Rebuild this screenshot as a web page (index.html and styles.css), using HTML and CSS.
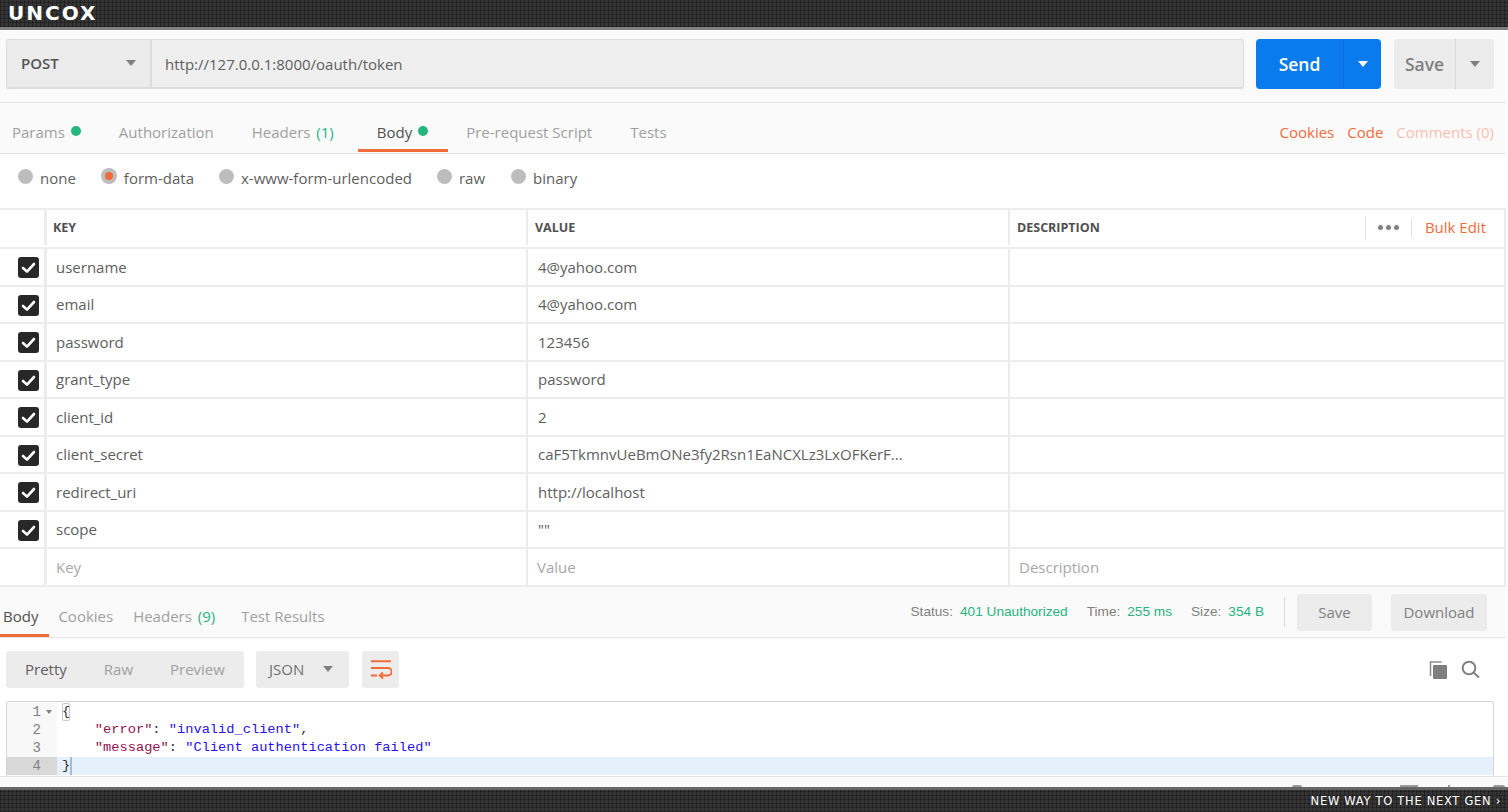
FILE: index.html
```html
<!DOCTYPE html>
<html lang="en">
<head>
<meta charset="utf-8">
<title>Postman</title>
<link rel="stylesheet" href="styles.css">
</head>
<body>
<header class="strip strip-top"><span class="logo">UNCOX</span></header>
<div class="req-bar">
  <div class="url-group">
    <div class="method"><span>POST</span><i class="caret"></i></div>
    <div class="url">http://127.0.0.1:8000/oauth/token</div>
  </div>
  <div class="send"><span class="send-label">Send</span><span class="send-drop"><i class="caret caret-white"></i></span></div>
  <div class="save"><span class="save-label">Save</span><span class="save-drop"><i class="caret"></i></span></div>
</div>
<nav class="tabs">
  <span class="tab t-params">Params<i class="dot"></i></span>
  <span class="tab t-auth">Authorization</span>
  <span class="tab t-head">Headers <b class="count">(1)</b></span>
  <span class="tab t-body active">Body<i class="dot"></i></span>
  <span class="tab t-pre">Pre-request Script</span>
  <span class="tab t-tests">Tests</span>
  <span class="tab-links"><a>Cookies</a><a>Code</a><a class="faded">Comments (0)</a></span>
</nav>
<div class="radios">
  <label class="radio r-none"><i class="rb"></i>none</label>
  <label class="radio r-form"><i class="rb on"></i>form-data</label>
  <label class="radio r-url"><i class="rb"></i>x-www-form-urlencoded</label>
  <label class="radio r-raw"><i class="rb"></i>raw</label>
  <label class="radio r-bin"><i class="rb"></i>binary</label>
</div>
<section class="table">
  <div class="row head">
    <div class="cell check"></div>
    <div class="cell">KEY</div>
    <div class="cell">VALUE</div>
    <div class="cell desc">DESCRIPTION<span class="head-tools"><span class="dots"><i></i><i></i><i></i></span><a>Bulk Edit</a></span></div>
  </div>
  <div class="row"><div class="cell check"><i class="cb"><svg viewBox="0 0 21 21"><path d="M5 11l4 3.6L16 7" /></svg></i></div><div class="cell">username</div><div class="cell">4@yahoo.com</div><div class="cell"></div></div>
  <div class="row"><div class="cell check"><i class="cb"><svg viewBox="0 0 21 21"><path d="M5 11l4 3.6L16 7" /></svg></i></div><div class="cell">email</div><div class="cell">4@yahoo.com</div><div class="cell"></div></div>
  <div class="row"><div class="cell check"><i class="cb"><svg viewBox="0 0 21 21"><path d="M5 11l4 3.6L16 7" /></svg></i></div><div class="cell">password</div><div class="cell">123456</div><div class="cell"></div></div>
  <div class="row"><div class="cell check"><i class="cb"><svg viewBox="0 0 21 21"><path d="M5 11l4 3.6L16 7" /></svg></i></div><div class="cell">grant_type</div><div class="cell">password</div><div class="cell"></div></div>
  <div class="row"><div class="cell check"><i class="cb"><svg viewBox="0 0 21 21"><path d="M5 11l4 3.6L16 7" /></svg></i></div><div class="cell">client_id</div><div class="cell">2</div><div class="cell"></div></div>
  <div class="row"><div class="cell check"><i class="cb"><svg viewBox="0 0 21 21"><path d="M5 11l4 3.6L16 7" /></svg></i></div><div class="cell">client_secret</div><div class="cell">caF5TkmnvUeBmONe3fy2Rsn1EaNCXLz3LxOFKerF...</div><div class="cell"></div></div>
  <div class="row"><div class="cell check"><i class="cb"><svg viewBox="0 0 21 21"><path d="M5 11l4 3.6L16 7" /></svg></i></div><div class="cell">redirect_uri</div><div class="cell">http://localhost</div><div class="cell"></div></div>
  <div class="row"><div class="cell check"><i class="cb"><svg viewBox="0 0 21 21"><path d="M5 11l4 3.6L16 7" /></svg></i></div><div class="cell">scope</div><div class="cell">""</div><div class="cell"></div></div>
  <div class="row ghost"><div class="cell check"></div><div class="cell">Key</div><div class="cell">Value</div><div class="cell">Description</div></div>
</section>
<div class="res-head">
  <span class="res-tab active">Body</span>
  <span class="res-tab">Cookies</span>
  <span class="res-tab">Headers <b class="count">(9)</b></span>
  <span class="res-tab res-last">Test Results</span>
  <div class="status">
    <span>Status:</span><b>401 Unauthorized</b>
    <span class="gap">Time:</span><b>255 ms</b>
    <span class="gap">Size:</span><b>354 B</b>
  </div>
  <span class="vr"></span>
  <span class="btn btn-save">Save</span>
  <span class="btn btn-dl">Download</span>
</div>
<div class="res-tools">
  <div class="views"><span class="on">Pretty</span><span>Raw</span><span>Preview</span></div>
  <div class="lang">JSON<i class="caret"></i></div>
  <div class="wrap-btn"><svg viewBox="0 0 22 20" width="22" height="20"><path d="M1 1.300H21M1 8H18a3.700 3.700 0 0 1 0 7.500H10M1 15.500H7M13 12.500l-3.200 3 3.200 3" /></svg></div>
  <div class="res-icons">
    <svg class="ic-copy" viewBox="0 0 20 20" width="20" height="20"><path class="back" d="M1.500 16V2h11" /><rect x="4" y="5" width="14" height="14" rx="1" /></svg>
    <svg class="ic-search" viewBox="0 0 20 20" width="20" height="20"><circle cx="8" cy="8" r="6.300" /><path d="M12.500 12.500l5.500 5" /></svg>
  </div>
</div>
<div class="code">
  <div class="gutter"><div>1<i class="fold"></i></div><div>2</div><div>3</div><div class="cur">4</div></div>
  <div class="lines">
    <div><span class="brace">{</span></div>
    <div>    <span class="k">"error"</span>: <span class="s">"invalid_client"</span>,</div>
    <div>    <span class="k">"message"</span>: <span class="s">"Client authentication failed"</span></div>
    <div class="cur">}<i class="cursor"></i></div>
  </div>
</div>
<div class="foot"><i class="frag arc"></i><i class="frag box"></i><i class="frag tick"></i><i class="frag arc2"></i></div>
<footer class="strip strip-bottom"><span class="tagline">NEW WAY TO THE NEXT GEN ›</span></footer>
</body>
</html>
```
FILE: styles.css
```css
* { box-sizing: border-box; }
html, body { margin: 0; height: 812px; overflow: hidden; }
body { font-family: "Open Sans", sans-serif; font-size: 15px; color: #505050; background: #fff; }
i { display: block; font-style: normal; }
b { font-weight: 400; }

.strip {
  background-color: #343434;
  background-image:
    repeating-linear-gradient(90deg, rgba(0,0,0,.28) 0 1px, transparent 1px 4px),
    repeating-linear-gradient(0deg, rgba(0,0,0,.28) 0 1px, transparent 1px 4px);
  display: flex;
  align-items: center;
  color: #fff;
}
.strip-top { height: 30px; border-bottom: 3px solid #808080; padding-left: 8px; }
.strip-bottom { height: 25px; border-top: 3px solid #666; justify-content: flex-end; padding-right: 7px; }
.logo { font: 700 20px/1 "DejaVu Sans", sans-serif; letter-spacing: 2px; margin-top: -2px; }
.tagline { font: 400 11.5px/1 "DejaVu Sans", sans-serif; letter-spacing: .7px; margin-top: 1px; }

.req-bar { height: 73px; margin-right: 2px; background: #fafafa; border-bottom: 1px solid #e6e6e6; padding: 9px 12px 13px 6px; display: flex; }
.url-group { width: 1238px; height: 50px; display: flex; border: 1px solid #dcdcdc; border-bottom-width: 2px; border-radius: 3px; background: #efefef; }
.method { width: 145px; display: flex; align-items: center; justify-content: space-between; padding: 0 14px 2px; background: #ececec; border-right: 2px solid #dcdcdc; font-weight: 600; font-size: 15px; color: #555; }
.url { padding-left: 13px; line-height: 48px; font-size: 15px; color: #606060; }
.caret { width: 0; height: 0; border: 5.500px solid transparent; border-top: 6px solid #808080; border-bottom: 0; }
.caret-white { border-top-color: #fff; }
.send { margin-left: 12px; width: 125px; height: 50px; background: #097bed; border-radius: 4px; display: flex; color: #fff; font-weight: 600; font-size: 17.500px; }
.send-label { width: 88px; text-align: center; line-height: 50px; border-right: 1px solid #0a6fd6; }
.send-drop { flex: 1; display: flex; align-items: center; justify-content: center; }
.save { margin-left: 13px; width: 100px; height: 50px; background: #ececec; border-radius: 4px; display: flex; color: #808080; font-weight: 600; font-size: 17.500px; }
.save-label { width: 62px; text-align: center; line-height: 50px; border-right: 1px solid #d8d8d8; }
.save-drop { flex: 1; display: flex; align-items: center; justify-content: center; }

.tabs { height: 51px; margin-right: 2px; background: #fafafa; border-bottom: 1px solid #e6e6e6; display: flex; align-items: center; color: #a0a0a0; padding-top: 7px; position: relative; }
.tab { display: flex; align-items: center; white-space: pre; }
.tab .dot { width: 10px; height: 10px; border-radius: 50%; background: #26b47f; margin-left: 6px; margin-top: -1px; }
.count { color: #26b47f; margin-left: 2px; }
.t-params { margin-left: 12px; }
.t-auth { margin-left: 38px; }
.t-head { margin-left: 38px; }
.t-body { margin-left: 43px; color: #505050; }
.t-body.active::after { content: ""; position: absolute; left: 358px; width: 90px; height: 3px; bottom: 1px; background: #f26b3a; }
.t-pre { margin-left: 38px; }
.t-tests { margin-left: 38px; }
.tab-links { margin-left: auto; padding-right: 12px; display: flex; gap: 13px; color: #f26b3a; }
.faded { opacity: .4; }

.radios { height: 54px; display: flex; align-items: center; padding-bottom: 7px; color: #606060; }
.radio { display: flex; align-items: center; }
.rb { width: 15px; height: 15px; border-radius: 50%; background: #bdbdbd; margin-right: 7px; margin-top: -3px; position: relative; }
.rb.on { width: 16px; height: 16px; }
.rb.on::after { content: ""; position: absolute; inset: 4px; border-radius: 50%; background: #f26b3a; }
.r-none { margin-left: 18px; }
.r-form { margin-left: 25px; }
.r-url { margin-left: 25px; }
.r-raw { margin-left: 25px; }
.r-bin { margin-left: 26px; }

.table { margin-right: 2px; border-top: 2px solid #ececec; border-right: 2px solid #ececec; }
.row { display: grid; grid-template-columns: 44px 482px 482px 1fr; height: 37.5px; border-bottom: 2px solid #ececec; color: #606060; font-size: 15px; }
.row.head { height: 39px; font-size: 12.5px; font-weight: 700; color: #505050; padding-bottom: 2px; }
.row.head .cell { padding-left: 6px; }
.row.head .cell:nth-child(n+3) { padding-left: 7px; }
.row.ghost { color: #a8a8a8; height: 38px; }
.cell { border-left: 2px solid #ececec; padding-left: 9px; display: flex; align-items: center; white-space: pre; }
.cell:nth-child(n+3) { padding-left: 10px; }
.row.ghost .cell:nth-child(n+3) { padding-left: 9px; }
.cell.check { border-left: 0; padding: 2px 0 0 18px; }
.row > .cell:nth-child(2) { border-left-width: 3px; }
.cb { width: 21px; height: 21px; border-radius: 3px; background: #282828; }
.cb svg { display: block; width: 21px; height: 21px; }
.cb path { fill: none; stroke: #fff; stroke-width: 2.600; stroke-linecap: round; stroke-linejoin: round; }
.desc { position: relative; }
.head-tools { margin-left: auto; display: flex; align-items: center; height: 24px; border-left: 1px solid #e4e4e4; font-weight: 400; font-size: 15px; color: #f26b3a; }
.dots { display: flex; gap: 3px; width: 46px; height: 20px; align-items: center; justify-content: center; border-right: 1px solid #e4e4e4; }
.dots i { width: 5px; height: 5px; border-radius: 50%; background: #808080; }
.head-tools a { padding: 0 18px 2px 13px; }

.res-head { height: 51px; margin-right: 2px; background: #fafafa; border-bottom: 1px solid #e6e6e6; display: flex; align-items: center; color: #a0a0a0; position: relative; }
.res-tab { white-space: pre; margin-left: 20px; padding-top: 8px; }
.res-tab.active { margin-left: 3px; color: #505050; }
.res-tab.active::after { content: ""; position: absolute; left: 0; bottom: 0; width: 49px; height: 3px; background: #f26b3a; }
.res-tab.res-last { margin-left: 26px; }
.status { margin-left: auto; font: 13.65px "Liberation Sans", sans-serif; color: #808080; display: flex; margin-top: -2px; }
.status b { color: #26b47f; margin-left: 7px; }
.status .gap { margin-left: 19px; }
.vr { width: 1px; height: 30px; background: #dcdcdc; margin: 0 12px 0 20px; }
.btn { height: 37px; background: #ececec; border-radius: 3px; line-height: 37px; text-align: center; color: #808080; }
.btn-save { width: 75px; }
.btn-dl { width: 96px; margin: 0 19px 0 19px; }

.res-tools { height: 63px; display: flex; align-items: center; padding: 0 6px; }
.views { width: 238px; height: 37px; border-radius: 3px; background: #ececec; display: flex; align-items: center; color: #a0a0a0; padding-bottom: 2px; }
.views span { margin-left: 37px; }
.views span.on { margin-left: 19px; color: #606060; }
.lang { margin-left: 12px; width: 93px; height: 37px; background: #ececec; border-radius: 3px; display: flex; align-items: center; justify-content: space-between; padding: 0 16px 2px 13px; color: #707070; }
.wrap-btn { margin-left: 13px; width: 37px; height: 37px; background: #ececec; border-radius: 3px; display: flex; align-items: center; justify-content: center; }
.wrap-btn path { fill: none; stroke: #f26b3a; stroke-width: 2; }
.res-icons { margin-left: auto; display: flex; gap: 12px; padding-right: 21px; margin-top: 1px; }
.ic-copy path.back { fill: none; stroke: #8c8c8c; stroke-width: 1.500; }
.ic-copy rect { fill: #808080; }
.ic-search circle, .ic-search path { fill: none; stroke: #808080; stroke-width: 2; }

.code { height: 75px; margin: 0 14px 0 6px; border: 1px solid #d4d4d4; border-bottom: 0; border-radius: 3px 3px 0 0; display: flex; font: 13.7px/18px "Liberation Mono", monospace; color: #333; overflow: hidden; padding-top: 1px; }
.gutter { width: 50px; background: #f8f8f8; color: #808080; text-align: right; flex: none; }
.gutter div { padding-right: 16px; height: 18px; position: relative; font-size: 14px; }
.gutter .cur { background: #d8d8d8; }
.fold { position: absolute; right: 5px; top: 7px; width: 0; height: 0; border: 3.500px solid transparent; border-top: 4px solid #808080; border-bottom: 0; }
.lines { flex: 1; }
.lines > div { padding-left: 5px; height: 18px; white-space: pre; position: relative; }
.lines .cur { background: #e6f0fc; }
.k { color: #92104f; }
.s { color: #2a10f0; }
.brace { outline: 1px solid #c8c8c8; outline-offset: -1px; border-radius: 2px; display: inline-block; height: 18px; }
.cursor { display: inline-block; width: 2px; height: 18px; background: #a8bccc; vertical-align: top; }

.foot { height: 11px; background: #fafafa; border-top: 1px solid #e4e4e4; display: flex; align-items: flex-end; padding-left: 1292px; }
.frag { height: 2px; background: #9a9a9a; }
.arc { width: 10px; border-radius: 5px 5px 0 0; }
.box { width: 18px; margin-left: 98px; }
.tick { width: 2px; margin-left: 30px; }
.arc2 { width: 12px; margin-left: 43px; border-radius: 6px 6px 0 0; }
```
